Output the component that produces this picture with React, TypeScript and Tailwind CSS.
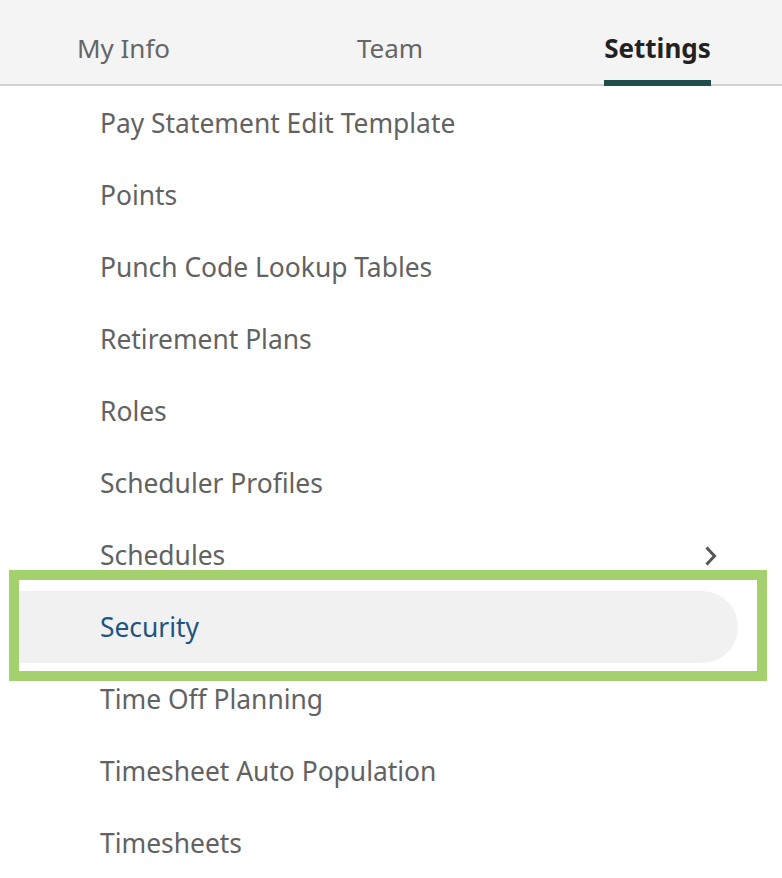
import React from "react";

const items = [
  "Pay Statement Edit Template",
  "Points",
  "Punch Code Lookup Tables",
  "Retirement Plans",
  "Roles",
  "Scheduler Profiles",
  "Schedules",
  "Security",
  "Time Off Planning",
  "Timesheet Auto Population",
  "Timesheets",
];

export default function App() {
  return (
    <div
      className="relative w-[782px] h-[878px] overflow-hidden bg-white"
      style={{ fontFamily: '"Noto Sans", "Open Sans", sans-serif' }}
    >
      <div className="h-[86px] bg-[#f4f4f4] border-b-2 border-[#d2d2d2] grid grid-cols-[247px_286px_249px] text-[26px]">
        <div className="flex justify-center items-center pt-[12px] text-[#666666]">My Info</div>
        <div className="flex justify-center items-center pt-[12px] text-[#666666]">Team</div>
        <div className="flex justify-center items-center">
          <div className="relative h-full flex items-center pt-[12px] font-bold text-[#222222]">
            Settings
            <div className="absolute left-0 right-0 bottom-[-2px] h-[6px] bg-[#1f4f4c]" />
          </div>
        </div>
      </div>
      <div className="flex flex-col pt-[1px]">
        {items.map((it) => {
          const active = it === "Security";
          return (
            <div
              key={it}
              className={
                active
                  ? "h-[72px] w-[719px] ml-[19px] flex items-center pl-[81px] pt-[2px] text-[26.4px] text-[#1e5480] bg-[#f1f1f1] rounded-r-full"
                  : "h-[72px] w-[738px] flex items-center justify-between pl-[100px] pt-[2px] text-[26.4px] text-[#626262]"
              }
            >
              <span>{it}</span>
              {it === "Schedules" && (
                <svg width="14" height="22" viewBox="0 0 14 22" className="mr-[20px]">
                  <path d="M2.5 2.5 L10.5 11 L2.5 19.5" fill="none" stroke="#555555" strokeWidth="3" />
                </svg>
              )}
            </div>
          );
        })}
      </div>
      <div className="absolute left-[9px] top-[570px] w-[758px] h-[111px] border-[10px] border-[#a4d16d]" />
    </div>
  );
}
